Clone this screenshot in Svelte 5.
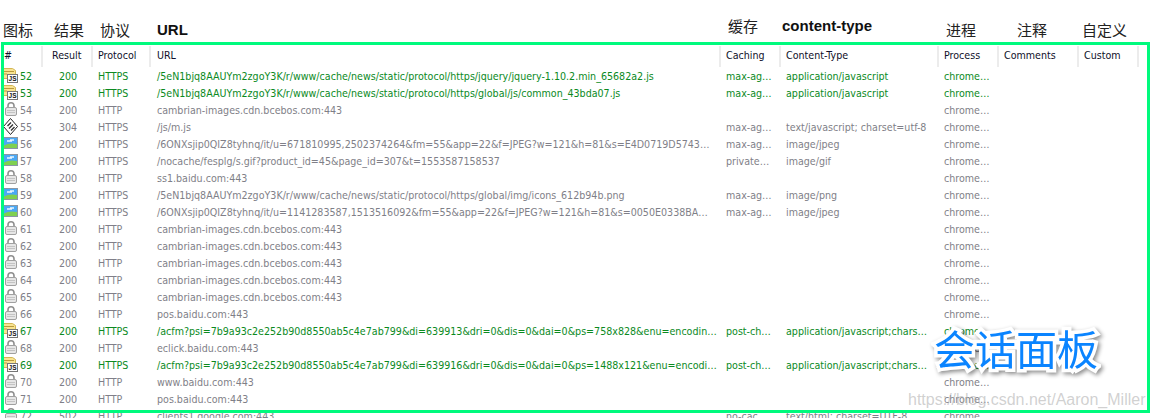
<script>
  const labels = [
    { text: "图标", cls: "w51" },
    { text: "结果", cls: "w46" },
    { text: "协议", cls: "w57" },
    { text: "URL", cls: "w571 latin" },
    { text: "缓存", cls: "w54 up" },
    { text: "content-type", cls: "w164 latin up" },
    { text: "进程", cls: "w71" },
    { text: "注释", cls: "w65" },
    { text: "自定义", cls: "w70" }
  ];

  const heads = ["#", "Result", "Protocol", "URL", "Caching", "Content-Type", "Process", "Comments", "Custom"];

  const base = "/5eN1bjq8AAUYm2zgoY3K/r/www/cache/news/static/protocol/https";
  const cdn = "cambrian-images.cdn.bcebos.com:443";
  const js = "application/javascript";

  const rows = [
    { id: 52, icon: "js", result: 200, proto: "HTTPS", url: base + "/jquery/jquery-1.10.2.min_65682a2.js", cache: "max-ag…", type: js, green: true },
    { id: 53, icon: "js", result: 200, proto: "HTTPS", url: base + "/global/js/common_43bda07.js", cache: "max-ag…", type: js, green: true },
    { id: 54, icon: "lock", result: 200, proto: "HTTP", url: cdn },
    { id: 55, icon: "diamond", result: 304, proto: "HTTPS", url: "/js/m.js", cache: "max-ag…", type: "text/javascript; charset=utf-8" },
    { id: 56, icon: "img", result: 200, proto: "HTTPS", url: "/6ONXsjip0QIZ8tyhnq/it/u=671810995,2502374264&fm=55&app=22&f=JPEG?w=121&h=81&s=E4D0719D5743…", cache: "max-ag…", type: "image/jpeg" },
    { id: 57, icon: "img", result: 200, proto: "HTTPS", url: "/nocache/fesplg/s.gif?product_id=45&page_id=307&t=1553587158537", cache: "private…", type: "image/gif" },
    { id: 58, icon: "lock", result: 200, proto: "HTTP", url: "ss1.baidu.com:443" },
    { id: 59, icon: "img", result: 200, proto: "HTTPS", url: base + "/global/img/icons_612b94b.png", cache: "max-ag…", type: "image/png" },
    { id: 60, icon: "img", result: 200, proto: "HTTPS", url: "/6ONXsjip0QIZ8tyhnq/it/u=1141283587,1513516092&fm=55&app=22&f=JPEG?w=121&h=81&s=0050E0338BA…", cache: "max-ag…", type: "image/jpeg" },
    { id: 61, icon: "lock", result: 200, proto: "HTTP", url: cdn },
    { id: 62, icon: "lock", result: 200, proto: "HTTP", url: cdn },
    { id: 63, icon: "lock", result: 200, proto: "HTTP", url: cdn },
    { id: 64, icon: "lock", result: 200, proto: "HTTP", url: cdn },
    { id: 65, icon: "lock", result: 200, proto: "HTTP", url: cdn },
    { id: 66, icon: "lock", result: 200, proto: "HTTP", url: "pos.baidu.com:443" },
    { id: 67, icon: "js", result: 200, proto: "HTTPS", url: "/acfm?psi=7b9a93c2e252b90d8550ab5c4e7ab799&di=639913&dri=0&dis=0&dai=0&ps=758x828&enu=encodin…", cache: "post-ch…", type: "application/javascript;chars…", green: true },
    { id: 68, icon: "lock", result: 200, proto: "HTTP", url: "eclick.baidu.com:443" },
    { id: 69, icon: "js", result: 200, proto: "HTTPS", url: "/acfm?psi=7b9a93c2e252b90d8550ab5c4e7ab799&di=639916&dri=0&dis=0&dai=0&ps=1488x121&enu=encodi…", cache: "post-ch…", type: "application/javascript;chars…", green: true },
    { id: 70, icon: "lock", result: 200, proto: "HTTP", url: "www.baidu.com:443" },
    { id: 71, icon: "lock", result: 200, proto: "HTTP", url: "pos.baidu.com:443" },
    { id: 72, icon: "lock", result: 502, proto: "HTTP", url: "clients1.google.com:443", cache: "no-cac…", type: "text/html; charset=UTF-8" }
  ];
</script>

{#snippet icon(kind)}
  <svg class="ico" width="17" height="17" viewBox="0 0 17 17">
    {#if kind === "js"}
      <path d="M0.500 0.500h9l3 2v8h-12z" fill="#f8e391" stroke="#d3b655" />
      <path d="M1 3.500h10M1 6h3" stroke="#b99a3c" />
      <rect x="4.500" y="6.500" width="10" height="8" fill="#fff" stroke="#777" />
      <text x="9.500" y="13.200" class="jstext">JS</text>
    {:else if kind === "lock"}
      <path d="M5 6V3.800a3 3 0 0 1 6 0V6" fill="none" stroke="#8f8f8f" stroke-width="1.600" />
      <rect x="2.500" y="5.500" width="11" height="8" rx="1.500" fill="#e6e6e6" stroke="#a0a0a0" />
      <path d="M4 8.500h8M4 10.500h8" stroke="#c4c4c4" />
    {:else if kind === "diamond"}
      <path d="M7.500 -0.500 14.500 7.500 7.500 15.500 0.500 7.500z" fill="#fff" stroke="#222" />
      <path d="M4.500 7 8 3.500M6 9.500 10 5.500M8 11.500 11.500 8" stroke="#333" stroke-width="1.400" />
    {:else}
      <rect x="0.500" y="1.500" width="14" height="11" fill="#4aa8f5" stroke="#8a97a5" />
      <path d="M1 12V9.500Q6 6.500 14 8V12z" fill="#7fd050" />
      <path d="M4 5h5M7 4h4" stroke="#e8f5ff" stroke-width="1.500" />
    {/if}
  </svg>
{/snippet}

<div class="page">
  <div class="labels">
    {#each labels as label}
      <span class={label.cls}>{label.text}</span>
    {/each}
  </div>

  <div class="table">
    <div class="row head">
      {#each heads as h}
        <div class="cell">{h}</div>
      {/each}
    </div>
    {#each rows as r (r.id)}
      <div class="row" class:green={r.green}>
        <div class="cell idcell">{@render icon(r.icon)}<span>{r.id}</span></div>
        <div class="cell center">{r.result}</div>
        <div class="cell">{r.proto}</div>
        <div class="cell">{r.url}</div>
        <div class="cell">{r.cache ?? ""}</div>
        <div class="cell">{r.type ?? ""}</div>
        <div class="cell">chrome…</div>
        <div class="cell"></div>
        <div class="cell"></div>
      </div>
    {/each}
  </div>

  <div class="frame"></div>
  <div class="title">会话面板</div>
  <div class="mark">https://blog.csdn.net/Aaron_Miller</div>
</div>

<style>
  :global(body) {
    background: #fff;
  }

  .page {
    position: relative;
    width: 1156px;
    height: 418px;
    overflow: hidden;
    background: #fff;
    font-family: "DejaVu Sans", "Noto Sans CJK SC", sans-serif;
  }

  .labels {
    display: flex;
    align-items: flex-end;
    height: 40px;
    padding-left: 3px;
    font-family: "Noto Sans CJK SC", sans-serif;
    font-size: 15px;
    line-height: 20px;
    color: #222;
  }

  .labels span {
    flex: none;
  }

  .labels .latin {
    font-family: "Liberation Sans", sans-serif;
    font-weight: 700;
    color: #111;
  }

  .labels .up {
    padding-bottom: 4px;
  }

  .w51 { width: 51px; }
  .w46 { width: 46px; }
  .w57 { width: 57px; }
  .w571 { width: 571px; }
  .w54 { width: 54px; }
  .w164 { width: 164px; }
  .w71 { width: 71px; }
  .w65 { width: 65px; }
  .w70 { width: 70px; }

  .table {
    padding-top: 3px;
    font-size: 10.6px;
    font-stretch: condensed;
    color: #7f7f88;
  }

  .row {
    display: grid;
    grid-template-columns: 43px 50px 58px 570px 60px 158px 60px 80px 60px;
    height: 17px;
    line-height: 17px;
    white-space: nowrap;
  }

  .row.green {
    color: #0b8a1e;
  }

  .row.head {
    height: 25px;
    line-height: 25px;
    color: #10102a;
  }

  .cell {
    padding-left: 5px;
    overflow: hidden;
    box-sizing: border-box;
  }

  .cell:nth-child(4) {
    padding-left: 6px;
  }

  .head .cell {
    height: 21px;
    margin-top: 3px;
    line-height: 19px;
    border-right: 2px solid #ececec;
  }

  .head .cell:first-child {
    padding-left: 4px;
  }

  .head .cell:nth-child(2) {
    padding-left: 9px;
  }

  .row .idcell {
    display: flex;
    align-items: center;
    padding-left: 3px;
    overflow: visible;
  }

  .center {
    padding-left: 0;
    padding-right: 0;
    text-align: center;
  }

  .ico {
    flex: none;
    overflow: visible;
  }

  .jstext {
    font-family: "Liberation Sans", sans-serif;
    font-size: 6.500px;
    font-weight: 700;
    fill: #111;
    text-anchor: middle;
  }

  .frame {
    position: absolute;
    left: 1px;
    top: 42px;
    width: 1149px;
    height: 371px;
    box-sizing: border-box;
    border: 3px solid #00fa7d;
  }

  .title {
    position: absolute;
    left: 934px;
    top: 319px;
    font-family: "Noto Sans CJK SC", sans-serif;
    font-size: 41px;
    line-height: 56px;
    color: #0a84ff;
    -webkit-text-stroke: 7px #fff;
    paint-order: stroke fill;
    filter: drop-shadow(2px 2px 2px rgba(0, 0, 0, 0.45));
  }

  .mark {
    position: absolute;
    left: 908px;
    top: 389px;
    font-family: "Liberation Sans", sans-serif;
    font-size: 16px;
    line-height: 22px;
    white-space: nowrap;
    color: rgba(170, 170, 170, 0.55);
  }
</style>
